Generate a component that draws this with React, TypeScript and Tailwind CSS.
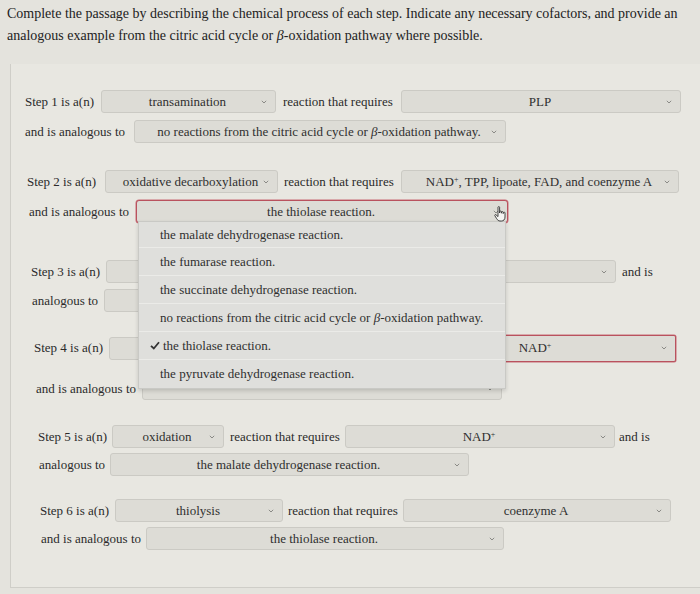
import React from "react";

const serif = { fontFamily: '"Liberation Serif", "Times New Roman", serif' };

function Chevron() {
  return (
    <svg width="6" height="4" viewBox="0 0 6 4" className="shrink-0">
      <path d="M0.8 0.8 L3 3 L5.2 0.8" fill="none" stroke="#8a8a86" strokeWidth="1" />
    </svg>
  );
}

function Sel({
  w,
  children,
  red,
}: {
  w: string;
  children?: React.ReactNode;
  red?: boolean;
}) {
  return (
    <div
      className={`${w} h-[23px] shrink-0 rounded-[3px] border ${
        red ? "border-[#b9525e] shadow-[0_0_0_0.5px_#c76c76]" : "border-[#cbcac4]"
      } bg-[#dddcd6] flex items-center pl-3 pr-2`}
    >
      <div className="flex-1 text-center text-[13px] text-[#2f2f2f] whitespace-nowrap overflow-hidden">
        {children}
      </div>
      <Chevron />
    </div>
  );
}

function L({ w, children }: { w: string; children?: React.ReactNode }) {
  return (
    <span className={`${w} shrink-0 whitespace-nowrap text-[13px] text-[#2b2b2b]`}>{children}</span>
  );
}

const beta = <i>β</i>;

export default function App() {
  return (
    <div className="w-[700px] h-[594px] overflow-hidden bg-[#e4e3dd] relative" style={serif}>
      <div className="pl-[7px] pt-[3px] text-[14px] leading-[22px] text-[#222]">
        <div>
          Complete the passage by describing the chemical process of each step. Indicate any necessary cofactors, and provide an
        </div>
        <div>analogous example from the citric acid cycle or {beta}-oxidation pathway where possible.</div>
      </div>

      <div className="absolute left-[10px] top-[64px] w-[700px] h-[524px] border-l border-b border-[#cfcec8] bg-[#e8e7e1]">
        <div className="relative -ml-[10px] flex flex-col">
          {/* Step 1 */}
          <div className="flex items-center h-[23px] mt-[26px] pl-[24px]">
            <L w="w-[76px]">Step 1 is a(n)</L>
            <Sel w="w-[175px]">transamination</Sel>
            <L w="w-[125px] pl-[7px]">reaction that requires</L>
            <Sel w="w-[280px]">PLP</Sel>
          </div>
          <div className="flex items-center h-[23px] mt-[7px] pl-[24px]">
            <L w="w-[109px]">and is analogous to</L>
            <Sel w="w-[372px]">
              no reactions from the citric acid cycle or {beta}-oxidation pathway.
            </Sel>
          </div>

          {/* Step 2 */}
          <div className="flex items-center h-[23px] mt-[27px] pl-[26px]">
            <L w="w-[78px]">Step 2 is a(n)</L>
            <Sel w="w-[173px]">oxidative decarboxylation</Sel>
            <L w="w-[123px] pl-[6px]">reaction that requires</L>
            <Sel w="w-[278px]">
              NAD<sup className="text-[8px]">+</sup>, TPP, lipoate, FAD, and coenzyme A
            </Sel>
          </div>
          <div className="flex items-center h-[23px] mt-[7px] pl-[28px] relative">
            <L w="w-[107px]">and is analogous to</L>
            <Sel w="w-[372px]" red>
              the thiolase reaction.
            </Sel>
          </div>

          {/* Step 3 */}
          <div className="flex items-center h-[23px] mt-[37px] pl-[30px]">
            <L w="w-[75px]">Step 3 is a(n)</L>
            <Sel w="w-[140px]"></Sel>
            <L w="w-[122px] pl-[5px]"></L>
            <Sel w="w-[248px]"></Sel>
            <L w="w-[60px] pl-[6px]">and is</L>
          </div>
          <div className="flex items-center h-[23px] mt-[6px] pl-[31px]">
            <L w="w-[72px]">analogous to</L>
            <Sel w="w-[330px]"></Sel>
          </div>

          {/* Step 4 */}
          <div className="flex items-center h-[26px] mt-[23px] pl-[33px]">
            <L w="w-[75px]">Step 4 is a(n)</L>
            <Sel w="w-[167px]"></Sel>
            <L w="w-[120px] pl-[5px]"></L>
            <div className="w-[280px] h-[27px] shrink-0 rounded-[2px] border border-[#b9525e] shadow-[0_0_0_0.5px_#c76c76] bg-[#dddcd6] flex items-center pl-3 pr-2">
              <div className="flex-1 text-center text-[13px] text-[#2f2f2f] whitespace-nowrap">
                NAD<sup className="text-[8px]">+</sup>
              </div>
              <Chevron />
            </div>
          </div>
          <div className="flex items-center h-[23px] mt-[16px] pl-[35px]">
            <L w="w-[106px]">and is analogous to</L>
            <Sel w="w-[360px]"></Sel>
          </div>

          {/* Step 5 */}
          <div className="flex items-center h-[23px] mt-[25px] pl-[37px]">
            <L w="w-[74px]">Step 5 is a(n)</L>
            <Sel w="w-[112px]">oxidation</Sel>
            <L w="w-[121px] pl-[6px]">reaction that requires</L>
            <Sel w="w-[270px]">
              NAD<sup className="text-[8px]">+</sup>
            </Sel>
            <L w="w-[50px] pl-[4px]">and is</L>
          </div>
          <div className="flex items-center h-[23px] mt-[5px] pl-[38px]">
            <L w="w-[71px]">analogous to</L>
            <Sel w="w-[359px]">the malate dehydrogenase reaction.</Sel>
          </div>

          {/* Step 6 */}
          <div className="flex items-center h-[23px] mt-[23px] pl-[39px]">
            <L w="w-[75px]">Step 6 is a(n)</L>
            <Sel w="w-[168px]">thiolysis</Sel>
            <L w="w-[120px] pl-[5px]">reaction that requires</L>
            <Sel w="w-[268px]">coenzyme A</Sel>
          </div>
          <div className="flex items-center h-[23px] mt-[5px] pl-[40px]">
            <L w="w-[105px]">and is analogous to</L>
            <Sel w="w-[358px]">the thiolase reaction.</Sel>
          </div>

          {/* Open dropdown overlay */}
          <div className="absolute left-[137px] top-[157px] w-[368px] bg-[#dfdfdc] border border-[#c9c9c5] shadow-[0_2px_4px_rgba(0,0,0,0.15)] text-[13px] text-[#2f2f2f]">
            {[
              { t: "the malate dehydrogenase reaction." },
              { t: "the fumarase reaction." },
              { t: "the succinate dehydrogenase reaction." },
              {
                t: (
                  <>
                    no reactions from the citric acid cycle or {beta}-oxidation pathway.
                  </>
                ),
              },
              { t: "the thiolase reaction.", checked: true },
              { t: "the pyruvate dehydrogenase reaction." },
            ].map((o, i) => (
              <div
                key={i}
                className={`${i === 0 ? "h-[26px]" : "h-[28px]"} flex items-center ${
                  i < 5 ? "border-b border-[#ebebe8]" : ""
                } ${o.checked ? "pl-[11px]" : "pl-[21px]"}`}
              >
                {o.checked && (
                  <svg width="10" height="9" viewBox="0 0 10 9" className="mr-[3px]">
                    <path d="M1 4.8 L3.8 7.5 L9 1.2" fill="none" stroke="#333" strokeWidth="1.8" />
                  </svg>
                )}
                <span className="whitespace-nowrap">{o.t}</span>
              </div>
            ))}
          </div>

          {/* mouse cursor */}
          <svg
            className="absolute left-[493px] top-[142px]"
            width="14"
            height="16"
            viewBox="0 0 14 16"
          >
            <path
              d="M4 1.2 C4 0.4 5.6 0.4 5.6 1.2 L5.6 7 L5.8 5.6 C5.8 4.8 7.4 4.8 7.4 5.6 L7.4 7.2 L7.6 6.2 C7.6 5.4 9.2 5.4 9.2 6.2 L9.2 7.6 L9.4 6.8 C9.4 6 11 6 11 6.8 L11 11 C11 13.5 9.5 15 7.5 15 L6 15 C4.5 15 3.5 14 2.6 12.6 L0.8 9.6 C0.4 8.8 1.4 8.2 2 8.8 L4 10.6 Z"
              fill="#f4f4f2"
              stroke="#333"
              strokeWidth="0.9"
            />
          </svg>
        </div>
      </div>
    </div>
  );
}
